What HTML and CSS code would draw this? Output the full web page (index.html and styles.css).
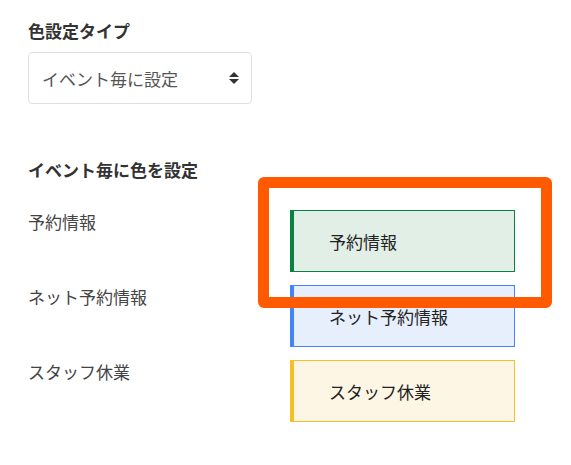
FILE: index.html
```html
<!DOCTYPE html>
<html lang="ja">
<head>
    <meta charset="UTF-8">
    <meta name="viewport" content="width=device-width, initial-scale=1.0">
    <title>色設定</title>
    <link rel="stylesheet" href="styles.css">
</head>
<body>
    <div class="container">
        <div class="field-title">色設定タイプ</div>
        <div class="select-box">
            <span>イベント毎に設定</span>
            <svg class="select-arrow" width="10" height="12" viewBox="0 0 10 12">
                <path d="M5 0 L10 5 L0 5 Z" fill="#333"/>
                <path d="M0 7 L10 7 L5 12 Z" fill="#333"/>
            </svg>
        </div>

        <div class="field-title section-title">イベント毎に色を設定</div>
        <div class="color-rows">
            <div class="row-label">予約情報</div>
            <div class="event-box event-green">予約情報</div>

            <div class="row-label">ネット予約情報</div>
            <div class="event-box event-blue">ネット予約情報</div>

            <div class="row-label">スタッフ休業</div>
            <div class="event-box event-yellow">スタッフ休業</div>

            <!-- 注目枠 -->
            <div class="highlight"></div>
        </div>
    </div>
</body>
</html>
```

FILE: styles.css
```css
body {
    font-family: "Noto Sans CJK JP", "Noto Sans", sans-serif;
    background: #fff;
    color: #333;
    margin: 0;
}
.container {
    padding: 19px 28px;
}
.field-title {
    font-size: 17px;
    font-weight: bold;
    line-height: 24px;
    color: #333;
}
.section-title {
    margin-top: 54px;
}
.select-box {
    display: flex;
    align-items: center;
    justify-content: space-between;
    box-sizing: border-box;
    width: 224px;
    height: 52px;
    margin-top: 9px;
    padding: 0 12px 0 13px;
    border: 1px solid #dcdfe3;
    border-radius: 4px;
    font-size: 17px;
    color: #555;
}
.color-rows {
    position: relative;
    display: grid;
    grid-template-columns: 262px 225px;
    row-gap: 13px;
    margin-top: 28px;
}
.row-label {
    font-size: 17px;
    line-height: 24px;
    color: #444;
}
.event-box {
    box-sizing: border-box;
    height: 62px;
    display: flex;
    align-items: center;
    padding-left: 35px;
    border: 1px solid;
    border-left-width: 4px;
    font-size: 17px;
    color: #222;
}
.event-green {
    background: #e1efe6;
    border-color: #0b8043;
}
.event-blue {
    background: #e8effc;
    border-color: #4285f4;
}
.event-yellow {
    background: #fef6e4;
    border-color: #f6bf26;
}
.highlight {
    position: absolute;
    left: 230px;
    top: -33px;
    width: 294px;
    height: 131px;
    box-sizing: border-box;
    border: 11px solid #ff5a00;
    border-radius: 6px;
}
```
